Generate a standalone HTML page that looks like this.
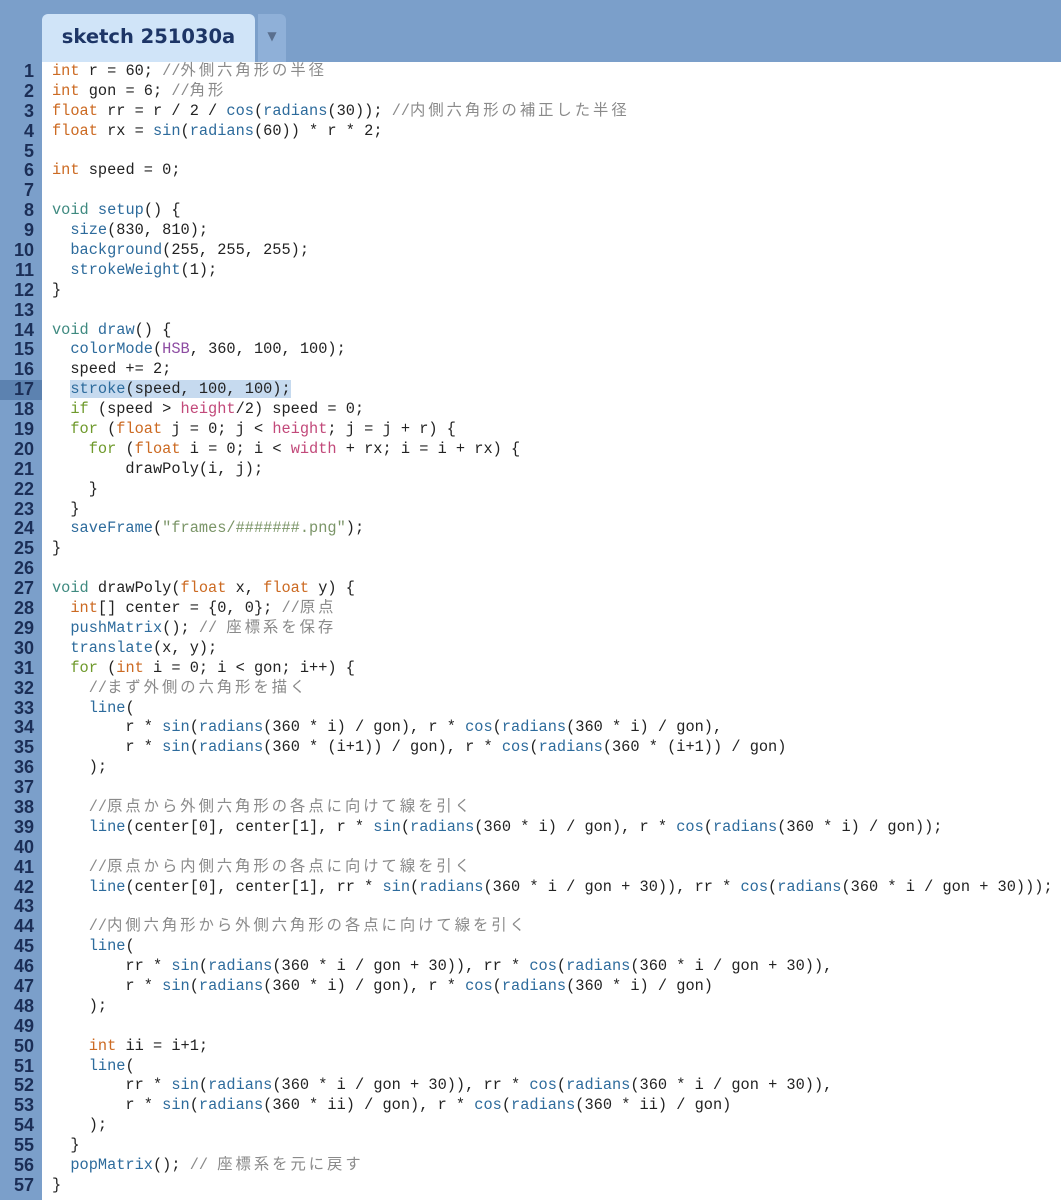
<!DOCTYPE html>
<html><head><meta charset="utf-8"><style>
html,body{margin:0;padding:0;}
body{width:1061px;height:1200px;background:#fff;position:relative;overflow:hidden;}
#top{position:absolute;left:0;top:0;width:1061px;height:62px;background:#7b9fca;}
#tab{position:absolute;left:42px;top:14px;width:213px;height:48px;background:#d0e4f8;border-radius:6px 6px 0 0;font-family:"DejaVu Sans","Liberation Sans",sans-serif;font-weight:bold;font-size:19.5px;color:#1d3566;text-align:center;line-height:46px;}
#dd{position:absolute;left:258px;top:14px;width:28px;height:48px;background:#8fb0d8;border-radius:0 6px 0 0;color:#5a6f8e;font-size:12px;text-align:center;line-height:44px;font-family:"DejaVu Sans",sans-serif;}
#gut{position:absolute;left:0;top:62px;width:42px;height:1138px;background:#7b9fca;}
#hl{position:absolute;left:0;top:380.4px;width:42px;height:19.9px;background:#5c82b0;}
#nums{position:absolute;left:0;top:62px;width:34px;text-align:right;font-family:"Liberation Sans",sans-serif;font-weight:bold;font-size:18px;color:#1b2e56;}
#nums div,#code div{height:19.9px;line-height:19.9px;overflow:visible;white-space:pre;}
#code{position:absolute;left:52px;top:62px;font-family:"Liberation Mono","Noto Sans CJK JP",monospace;font-size:15.3px;color:#222;}
.k{color:#cc6a22}.v{color:#3f8a80}.f{color:#2d6b9c}.c{color:#6f9a2c}.p{color:#c2497a}.g{color:#8a8a8a}.s{color:#7b9568}.h{color:#8d4ca2}
.j{letter-spacing:3px;font-family:"Noto Sans CJK JP",sans-serif;line-height:1;}
.sel{background:#c6daef}
</style></head><body>
<div id="top"></div>
<div id="tab">sketch 251030a</div>
<div id="dd">▼</div>
<div id="gut"></div>
<div id="hl"></div>
<div id="nums"><div>1</div><div>2</div><div>3</div><div>4</div><div>5</div><div>6</div><div>7</div><div>8</div><div>9</div><div>10</div><div>11</div><div>12</div><div>13</div><div>14</div><div>15</div><div>16</div><div>17</div><div>18</div><div>19</div><div>20</div><div>21</div><div>22</div><div>23</div><div>24</div><div>25</div><div>26</div><div>27</div><div>28</div><div>29</div><div>30</div><div>31</div><div>32</div><div>33</div><div>34</div><div>35</div><div>36</div><div>37</div><div>38</div><div>39</div><div>40</div><div>41</div><div>42</div><div>43</div><div>44</div><div>45</div><div>46</div><div>47</div><div>48</div><div>49</div><div>50</div><div>51</div><div>52</div><div>53</div><div>54</div><div>55</div><div>56</div><div>57</div></div>
<div id="code">
<div><span class="k">int</span> r = 60; <span class="g">//<span class="j">外側六角形の半径</span></span></div>
<div><span class="k">int</span> gon = 6; <span class="g">//<span class="j">角形</span></span></div>
<div><span class="k">float</span> rr = r / 2 / <span class="f">cos</span>(<span class="f">radians</span>(30)); <span class="g">//<span class="j">内側六角形の補正した半径</span></span></div>
<div><span class="k">float</span> rx = <span class="f">sin</span>(<span class="f">radians</span>(60)) * r * 2;</div>
<div></div>
<div><span class="k">int</span> speed = 0;</div>
<div></div>
<div><span class="v">void</span> <span class="f">setup</span>() {</div>
<div>  <span class="f">size</span>(830, 810);</div>
<div>  <span class="f">background</span>(255, 255, 255);</div>
<div>  <span class="f">strokeWeight</span>(1);</div>
<div>}</div>
<div></div>
<div><span class="v">void</span> <span class="f">draw</span>() {</div>
<div>  <span class="f">colorMode</span>(<span class="h">HSB</span>, 360, 100, 100);</div>
<div>  speed += 2;</div>
<div>  <span class="sel"><span class="f">stroke</span>(speed, 100, 100);</span></div>
<div>  <span class="c">if</span> (speed &gt; <span class="p">height</span>/2) speed = 0;</div>
<div>  <span class="c">for</span> (<span class="k">float</span> j = 0; j &lt; <span class="p">height</span>; j = j + r) {</div>
<div>    <span class="c">for</span> (<span class="k">float</span> i = 0; i &lt; <span class="p">width</span> + rx; i = i + rx) {</div>
<div>        drawPoly(i, j);</div>
<div>    }</div>
<div>  }</div>
<div>  <span class="f">saveFrame</span>(<span class="s">"frames/#######.png"</span>);</div>
<div>}</div>
<div></div>
<div><span class="v">void</span> drawPoly(<span class="k">float</span> x, <span class="k">float</span> y) {</div>
<div>  <span class="k">int</span>[] center = {0, 0}; <span class="g">//<span class="j">原点</span></span></div>
<div>  <span class="f">pushMatrix</span>(); <span class="g">// <span class="j">座標系を保存</span></span></div>
<div>  <span class="f">translate</span>(x, y);</div>
<div>  <span class="c">for</span> (<span class="k">int</span> i = 0; i &lt; gon; i++) {</div>
<div>    <span class="g">//<span class="j">まず外側の六角形を描く</span></span></div>
<div>    <span class="f">line</span>(</div>
<div>        r * <span class="f">sin</span>(<span class="f">radians</span>(360 * i) / gon), r * <span class="f">cos</span>(<span class="f">radians</span>(360 * i) / gon),</div>
<div>        r * <span class="f">sin</span>(<span class="f">radians</span>(360 * (i+1)) / gon), r * <span class="f">cos</span>(<span class="f">radians</span>(360 * (i+1)) / gon)</div>
<div>    );</div>
<div></div>
<div>    <span class="g">//<span class="j">原点から外側六角形の各点に向けて線を引く</span></span></div>
<div>    <span class="f">line</span>(center[0], center[1], r * <span class="f">sin</span>(<span class="f">radians</span>(360 * i) / gon), r * <span class="f">cos</span>(<span class="f">radians</span>(360 * i) / gon));</div>
<div></div>
<div>    <span class="g">//<span class="j">原点から内側六角形の各点に向けて線を引く</span></span></div>
<div>    <span class="f">line</span>(center[0], center[1], rr * <span class="f">sin</span>(<span class="f">radians</span>(360 * i / gon + 30)), rr * <span class="f">cos</span>(<span class="f">radians</span>(360 * i / gon + 30)));</div>
<div></div>
<div>    <span class="g">//<span class="j">内側六角形から外側六角形の各点に向けて線を引く</span></span></div>
<div>    <span class="f">line</span>(</div>
<div>        rr * <span class="f">sin</span>(<span class="f">radians</span>(360 * i / gon + 30)), rr * <span class="f">cos</span>(<span class="f">radians</span>(360 * i / gon + 30)),</div>
<div>        r * <span class="f">sin</span>(<span class="f">radians</span>(360 * i) / gon), r * <span class="f">cos</span>(<span class="f">radians</span>(360 * i) / gon)</div>
<div>    );</div>
<div></div>
<div>    <span class="k">int</span> ii = i+1;</div>
<div>    <span class="f">line</span>(</div>
<div>        rr * <span class="f">sin</span>(<span class="f">radians</span>(360 * i / gon + 30)), rr * <span class="f">cos</span>(<span class="f">radians</span>(360 * i / gon + 30)),</div>
<div>        r * <span class="f">sin</span>(<span class="f">radians</span>(360 * ii) / gon), r * <span class="f">cos</span>(<span class="f">radians</span>(360 * ii) / gon)</div>
<div>    );</div>
<div>  }</div>
<div>  <span class="f">popMatrix</span>(); <span class="g">// <span class="j">座標系を元に戻す</span></span></div>
<div>}</div>
</div>
</body></html>
